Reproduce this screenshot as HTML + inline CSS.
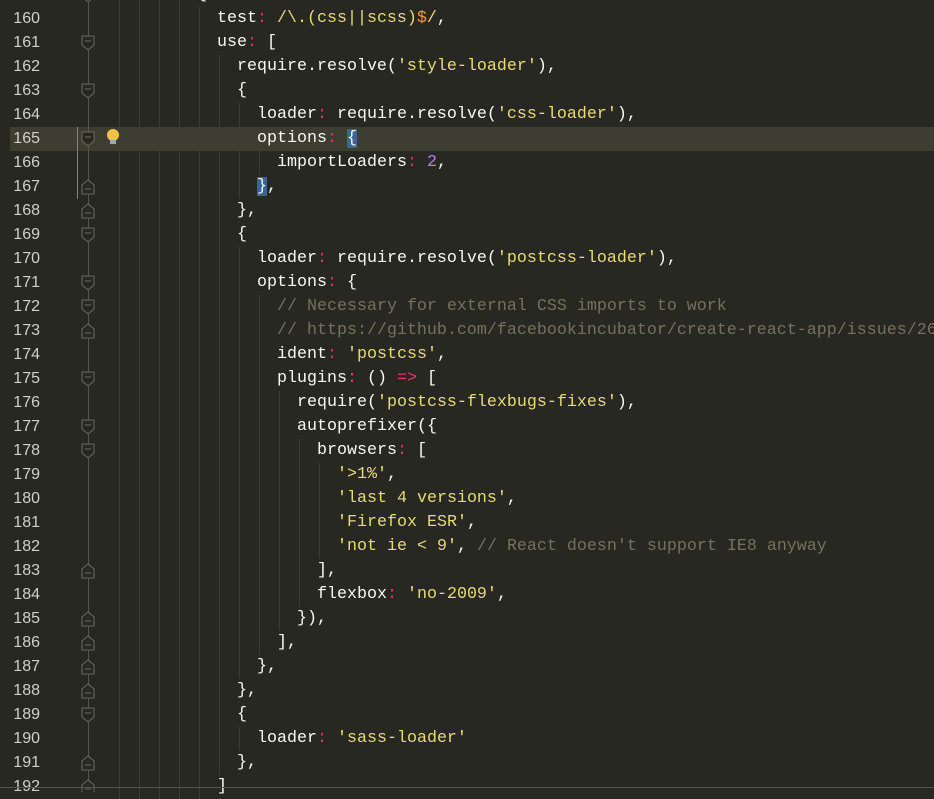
<!DOCTYPE html>
<html><head><meta charset="utf-8"><style>
html,body{margin:0;padding:0}
body{width:934px;height:792px;background:#272822;overflow:hidden;position:relative;font-family:"Liberation Mono",monospace;font-size:16.67px;color:#f8f8f2}
.ln{position:absolute;left:0;width:40px;text-align:right;color:#d0d0c8;line-height:24px;font-family:"Liberation Sans",sans-serif;font-size:16px}
.c{position:absolute;white-space:pre;line-height:24px}
.k{color:#f92672}.s{color:#e6db74}.m{color:#75715e}.n{color:#ae81ff}.o{color:#fd971f}
.g{position:absolute;width:1px;height:24px;background:#3b3c35}
.br{background:#3a6595}
</style></head><body>
<div style="position:absolute;left:10px;top:127px;width:924px;height:24px;background:#3e3d32"></div>
<div style="position:absolute;left:77px;top:127px;width:1px;height:72px;background:#5a8ab8"></div>
<div style="position:absolute;left:88px;top:0;width:1px;height:792px;background:#55564d"></div>
<div id="guides"></div>
<svg id="folds" width="934" height="792" style="position:absolute;left:0;top:0"></svg>
<div id="code"></div>
<div style="position:absolute;left:107px;top:129px;width:12px;height:12px;border-radius:50%;background:#f5c242"></div>
<div style="position:absolute;left:110px;top:140px;width:6px;height:4px;background:#9aa"></div>
<div style="position:absolute;left:0;top:787px;width:934px;height:1px;background:#55564d"></div>
<script>
var L=[
[159,'{',8],
[160,'test<span class="k">:</span> <span class="s">/\\.(css||scss)</span><span class="o">$</span><span class="s">/</span>,',10],
[161,'use<span class="k">:</span> [',10],
[162,'require.resolve(<span class="s">\'style-loader\'</span>),',12],
[163,'{',12],
[164,'loader<span class="k">:</span> require.resolve(<span class="s">\'css-loader\'</span>),',14],
[165,'options<span class="k">:</span> <span class="br">{</span>',14],
[166,'importLoaders<span class="k">:</span> <span class="n">2</span>,',16],
[167,'<span class="br">}</span>,',14],
[168,'},',12],
[169,'{',12],
[170,'loader<span class="k">:</span> require.resolve(<span class="s">\'postcss-loader\'</span>),',14],
[171,'options<span class="k">:</span> {',14],
[172,'<span class="m">// Necessary for external CSS imports to work</span>',16],
[173,'<span class="m">// https://github.com/facebookincubator/create-react-app/issues/2677</span>',16],
[174,'ident<span class="k">:</span> <span class="s">\'postcss\'</span>,',16],
[175,'plugins<span class="k">:</span> () <span class="k">=&gt;</span> [',16],
[176,'require(<span class="s">\'postcss-flexbugs-fixes\'</span>),',18],
[177,'autoprefixer({',18],
[178,'browsers<span class="k">:</span> [',20],
[179,'<span class="s">\'&gt;1%\'</span>,',22],
[180,'<span class="s">\'last 4 versions\'</span>,',22],
[181,'<span class="s">\'Firefox ESR\'</span>,',22],
[182,'<span class="s">\'not ie &lt; 9\'</span>, <span class="m">// React doesn\'t support IE8 anyway</span>',22],
[183,'],',20],
[184,'flexbox<span class="k">:</span> <span class="s">\'no-2009\'</span>,',20],
[185,'}),',18],
[186,'],',16],
[187,'},',14],
[188,'},',12],
[189,'{',12],
[190,'loader<span class="k">:</span> <span class="s">\'sass-loader\'</span>',14],
[191,'},',12],
[192,']',10]];
var h='',g='';
L.forEach(function(l){var t=7+(l[0]-160)*24;
var ind=l[0]==166||l[0]==172||l[0]==173?l[2]:l[2];
h+='<div class="ln" style="top:'+t+'px">'+l[0]+'</div><div class="c" style="left:'+(117+l[2]*10)+'px;top:'+t+'px">'+l[1]+'</div>';
for(var k=0;k*2<l[2];k++){g+='<div class="g" style="left:'+(119+k*20)+'px;top:'+t+'px"></div>';}
});
document.getElementById('code').innerHTML=h;
document.getElementById('guides').innerHTML=g;
var S={159:1,161:1,163:1,165:1,169:1,171:1,172:1,175:1,177:1,178:1,189:1},E={167:1,168:1,173:1,183:1,185:1,186:1,187:1,188:1,191:1,192:1};
var f='';
for(var n=159;n<=192;n++){var cy=19+(n-160)*24;
if(S[n])f+='<path d="M82 '+(cy-7)+'h12v9l-6 5l-6-5z" fill="#272822" stroke="#6a6b62"/><path d="M85 '+(cy-2)+'h6" stroke="#6a6b62"/>';
if(E[n])f+='<path d="M82 '+(cy+7)+'h12v-9l-6-5l-6 5z" fill="#272822" stroke="#6a6b62"/><path d="M85 '+(cy+2)+'h6" stroke="#6a6b62"/>';}
document.getElementById('folds').innerHTML=f;
</script>
</body></html>
